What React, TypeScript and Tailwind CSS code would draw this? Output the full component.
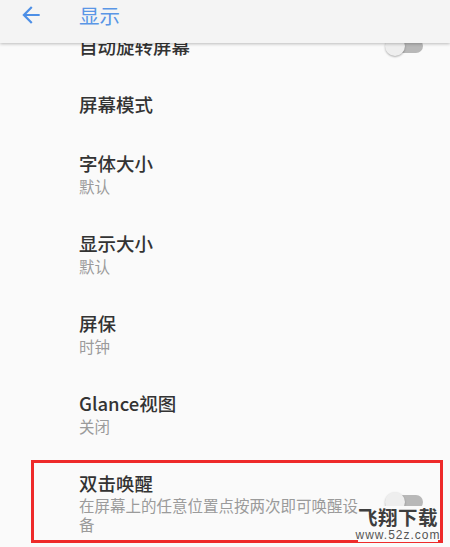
import React from "react";

const font = { fontFamily: '"Noto Sans CJK SC", "Noto Sans", sans-serif' };

function Toggle() {
  return (
    <div className="relative w-[40px] h-[20px] shrink-0">
      <div className="absolute right-[2px] top-[3px] w-[34px] h-[14px] rounded-full bg-[#b8b8b8]" />
      <div className="absolute left-0 top-0 w-[20px] h-[20px] rounded-full bg-[#eeeeee] shadow-[0_1px_2px_rgba(0,0,0,0.3)]" />
    </div>
  );
}

function Row({ title, sub }: { title: string; sub: string }) {
  return (
    <div className="py-[17px] pl-[79px] flex flex-col">
      <div className="text-[18.5px] leading-[26px] font-medium text-[#333333]">{title}</div>
      <div className="text-[15.5px] leading-[20px] text-[#9b9b9b]">{sub}</div>
    </div>
  );
}

export default function App() {
  return (
    <div className="relative w-[450px] h-[547px] overflow-hidden bg-[#fafafa]" style={font}>
      <div className="absolute top-0 left-0 right-0 h-[43px] bg-[#f4f4f4] z-10 flex items-start pt-[2px] shadow-[0_1px_3px_rgba(0,0,0,0.25)]">
        <svg className="ml-[18px]" width="26" height="26" viewBox="0 0 24 24" fill="#4d8fe6">
          <path d="M20 11H7.83l5.59-5.59L12 4l-8 8 8 8 1.41-1.41L7.83 13H20v-2z" />
        </svg>
        <div className="ml-[35px] text-[20.5px] leading-[26px] text-[#5a96e6]">显示</div>
      </div>

      <div className="pt-[17px] flex flex-col">
        <div className="h-[58px] flex items-center justify-between pl-[79px] pr-[25px]">
          <div className="text-[18.5px] leading-[26px] font-medium text-[#333333]">自动旋转屏幕</div>
          <Toggle />
        </div>
        <div className="h-[58px] flex items-center pl-[79px]">
          <div className="text-[18.5px] leading-[26px] font-medium text-[#333333]">屏幕模式</div>
        </div>
        <Row title="字体大小" sub="默认" />
        <Row title="显示大小" sub="默认" />
        <Row title="屏保" sub="时钟" />
        <Row title="Glance视图" sub="关闭" />
        <div className="py-[17px] pl-[79px] pr-[25px] flex items-center justify-between">
          <div className="flex flex-col w-[286px]">
            <div className="text-[18.5px] leading-[26px] font-medium text-[#333333]">双击唤醒</div>
            <div className="text-[15.5px] leading-[19px] text-[#9b9b9b]">
              在屏幕上的任意位置点按两次即可唤醒设备
            </div>
          </div>
          <Toggle />
        </div>
      </div>

      <div className="absolute left-[31px] top-[460px] w-[412px] h-[83px] border-[3px] border-[#ee2a2a] pointer-events-none" />

      <div className="absolute left-[358px] top-[506px] w-[80px] flex flex-col items-center bg-[#fafafa]">
        <div className="text-[19.5px] leading-[21px] font-bold text-[#3e3e3e] tracking-[0.5px]">飞翔下载</div>
        <div
          className="text-[12px] leading-[14px] text-[#555555] tracking-[1px] mt-[1px]"
          style={{ fontFamily: '"Liberation Sans", Arial, sans-serif' }}
        >
          www.52z.com
        </div>
      </div>
    </div>
  );
}
